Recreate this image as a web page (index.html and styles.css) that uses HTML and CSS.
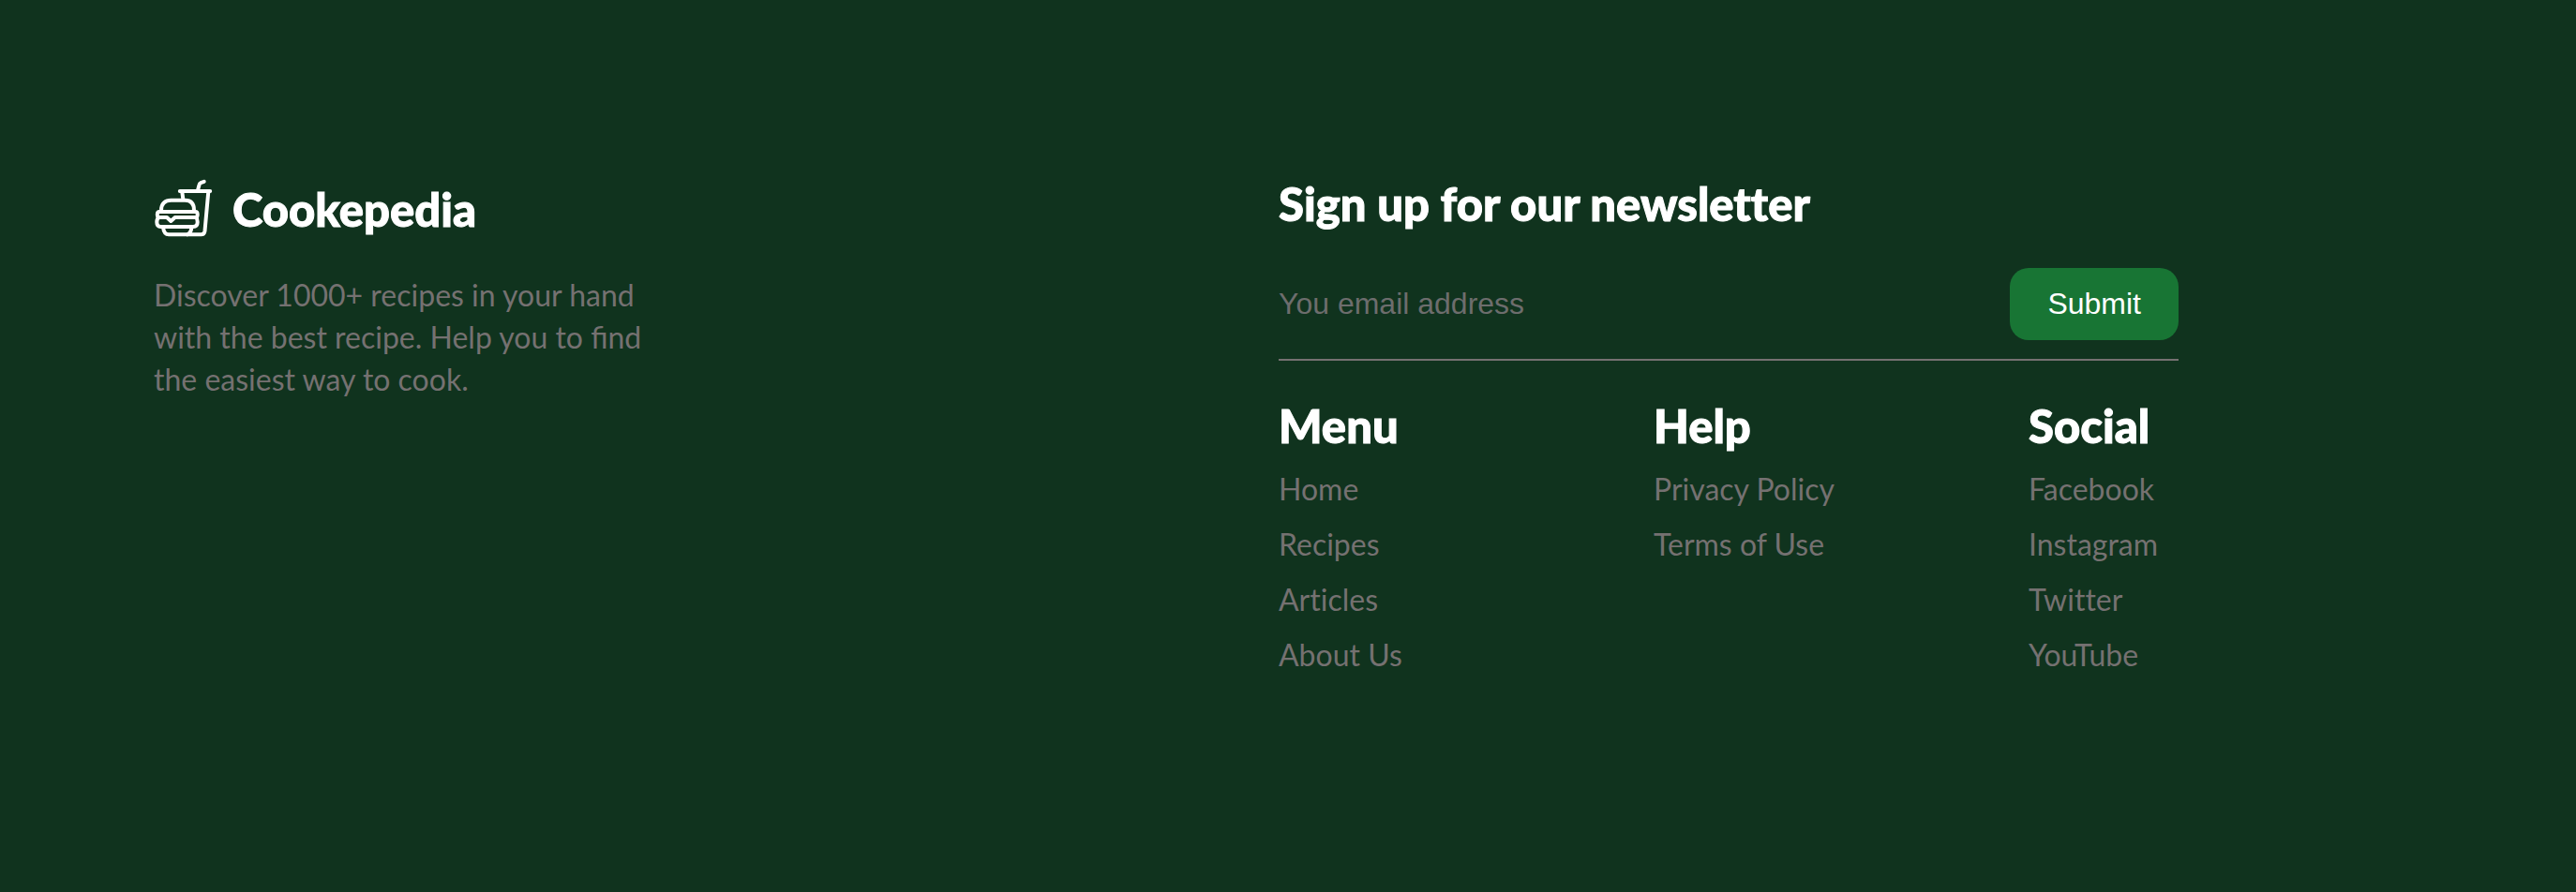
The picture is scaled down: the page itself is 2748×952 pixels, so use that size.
FILE: index.html
```html
<!DOCTYPE html>
<html lang="en">
<head>
<meta charset="utf-8">
<meta name="viewport" content="width=device-width, initial-scale=1">
<title>Cookepedia</title>
<link rel="stylesheet" href="styles.css">
</head>
<body>
<footer class="footer">
  <div class="brand">
    <div class="logo">
      <svg class="logo-icon" viewBox="0 0 64 64" aria-hidden="true">
        <path d="M53.7 2.8 L50 4.2 Q48.9 4.7 48.6 6 L47 12"/>
        <path d="M27.8 13 H60.2"/>
        <path d="M58.3 13.5 L54.5 55.5 Q54 59.3 50.5 59.3 H16 Q11 59.3 10 51.7"/>
        <path d="M30.3 14 L31.3 21.5"/>
        <path d="M8 33.5 C8 26.5 12 22.8 18.5 22.8 H33.5 C39.5 22.8 43 26.5 43 33.5"/>
        <path d="M6 35 H44.5 Q46.7 35 46.7 38 Q46.7 41 44.5 41 H22.7 L18.3 45 L14 41 H6 Q3.8 41 3.8 38 Q3.8 35 6 35 Z"/>
        <path d="M5.5 41 Q3.3 42.5 3.3 46 Q3.3 51 7.5 51 H42 Q46.7 51 46.7 46 Q46.7 42.5 45 41"/>
        <path d="M40.3 51.7 Q40 57.5 36 59.3"/>
      </svg>
      <span class="logo-name">Cookepedia</span>
    </div>
    <p class="description">Discover 1000+ recipes in your hand with the best recipe. Help you to find the easiest way to cook.</p>
  </div>
  <div class="content">
    <h2 class="title" id="newsletter-title">Sign up for our newsletter</h2>
    <form class="newsletter" onsubmit="return false">
      <input class="email" type="email" placeholder="You email address" aria-labelledby="newsletter-title">
      <button class="submit" type="submit">Submit</button>
    </form>
    <nav class="columns" aria-label="Footer">
      <section class="column">
        <h2 class="title">Menu</h2>
        <ul class="links">
          <li><a href="#">Home</a></li>
          <li><a href="#">Recipes</a></li>
          <li><a href="#">Articles</a></li>
          <li><a href="#">About Us</a></li>
        </ul>
      </section>
      <section class="column">
        <h2 class="title">Help</h2>
        <ul class="links">
          <li><a href="#">Privacy Policy</a></li>
          <li><a href="#">Terms of Use</a></li>
        </ul>
      </section>
      <section class="column">
        <h2 class="title">Social</h2>
        <ul class="links">
          <li><a href="#">Facebook</a></li>
          <li><a href="#">Instagram</a></li>
          <li><a href="#">Twitter</a></li>
          <li><a href="#">YouTube</a></li>
        </ul>
      </section>
    </nav>
  </div>
</footer>
</body>
</html>
```

FILE: styles.css
```css
* {
  box-sizing: border-box;
  margin: 0;
  padding: 0;
}

body {
  background: #10331e;
  color: #757171;
  font-family: Lato, sans-serif;
  font-size: 32px;
  line-height: 45px;
}

.footer {
  display: grid;
  grid-template-columns: 1fr 1fr;
  padding: 182px 184px 182px 164px;
}

.brand {
  display: flex;
  flex-direction: column;
  gap: 36px;
  padding-top: 8px;
}

.logo {
  display: flex;
  align-items: center;
  gap: 20px;
}

.logo-icon {
  width: 64px;
  height: 64px;
  fill: none;
  stroke: #fff;
  stroke-width: 4;
  stroke-linecap: round;
  stroke-linejoin: round;
}

.logo-name,
.title {
  color: #fff;
  font-size: 49px;
  font-weight: 900;
  font-variant-ligatures: no-common-ligatures;
  -webkit-text-stroke: 1px #fff;
}

.logo-name {
  line-height: 66px;
}

.title {
  line-height: 70px;
}

.description {
  max-width: 540px;
}

.newsletter {
  display: flex;
  align-items: center;
  width: 80%;
  margin: 34px 0;
  padding-bottom: 20px;
  border-bottom: 2px solid #757171;
}

.email {
  flex: 1;
  min-width: 0;
  border: 0;
  outline: 0;
  background: transparent;
  color: #fff;
  font: 32px "Liberation Sans", Arial, sans-serif;
}

.email::placeholder {
  color: #6d6d6d;
}

.submit {
  padding: 20px 40px;
  border: 0;
  border-radius: 20px;
  background: #187534;
  color: #fff;
  font: 32px "Liberation Sans", Arial, sans-serif;
}

.columns {
  display: grid;
  grid-template-columns: repeat(3, 1fr);
}

.column {
  display: flex;
  flex-direction: column;
  gap: 10px;
}

.links {
  display: flex;
  flex-direction: column;
  gap: 14px;
  font-variant-ligatures: no-common-ligatures;
  list-style: none;
}

.links a {
  color: inherit;
  text-decoration: none;
}
```
